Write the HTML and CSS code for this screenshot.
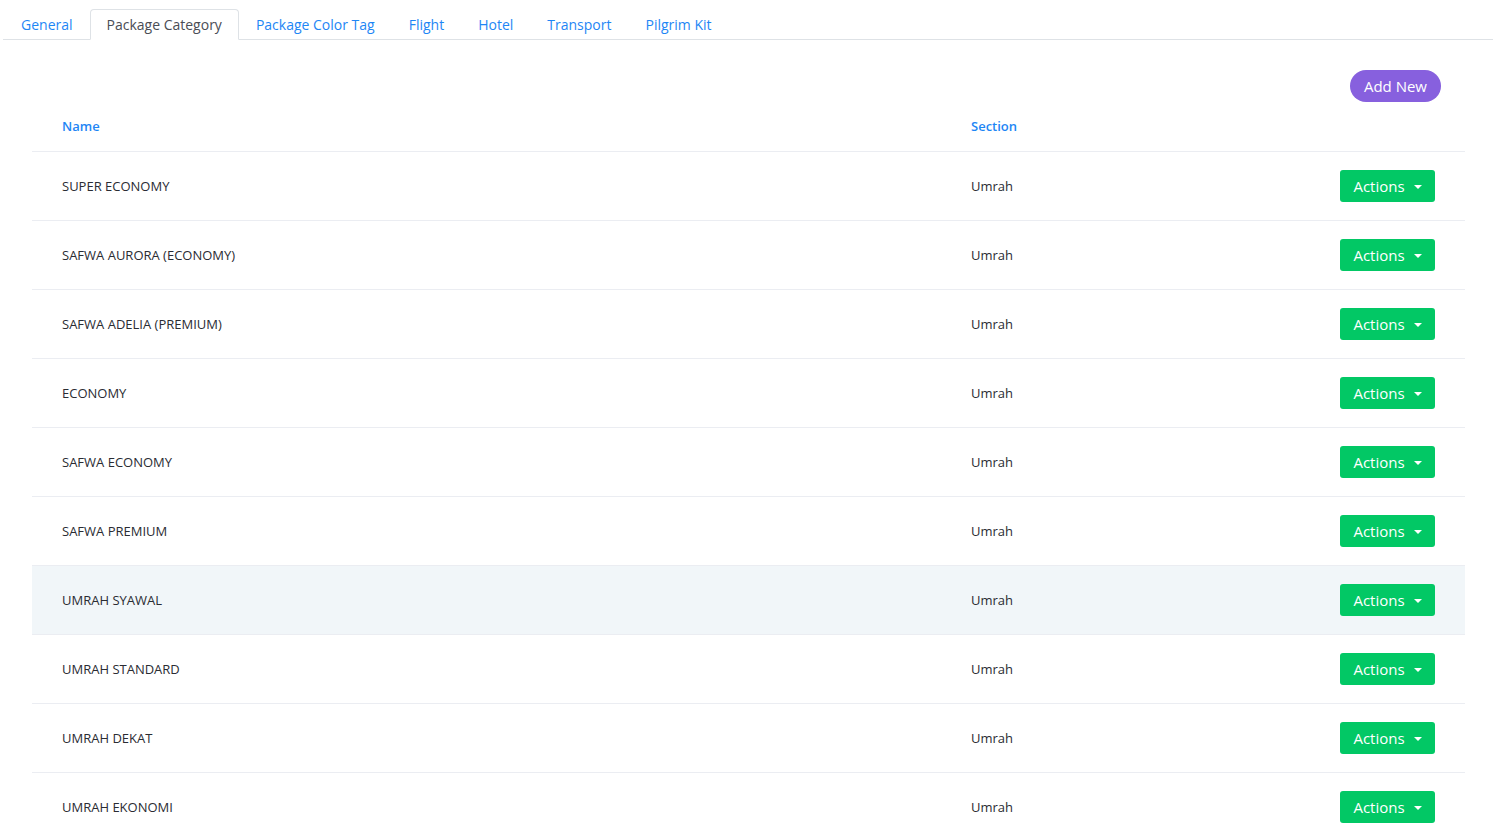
FILE: index.html
```html
<!DOCTYPE html>
<html>
<head>
  <link rel="stylesheet" href="styles.css">
</head>
<body>
  <div class="page">
    <ul class="tabs">
      <li><a href="#">General</a></li>
      <li class="active"><a href="#">Package Category</a></li>
      <li><a href="#">Package Color Tag</a></li>
      <li><a href="#">Flight</a></li>
      <li><a href="#">Hotel</a></li>
      <li><a href="#">Transport</a></li>
      <li><a href="#">Pilgrim Kit</a></li>
    </ul>

    <div class="panel">
      <div class="toolbar">
        <button class="btn-add">Add New</button>
      </div>
      <table class="list">
        <thead>
          <tr>
            <th class="col-name">Name</th>
            <th class="col-section">Section</th>
            <th></th>
          </tr>
        </thead>
        <tbody>
          <tr><td>SUPER ECONOMY</td><td>Umrah</td><td class="col-act"><button class="btn-actions">Actions <span class="caret"></span></button></td></tr>
          <tr><td>SAFWA AURORA (ECONOMY)</td><td>Umrah</td><td class="col-act"><button class="btn-actions">Actions <span class="caret"></span></button></td></tr>
          <tr><td>SAFWA ADELIA (PREMIUM)</td><td>Umrah</td><td class="col-act"><button class="btn-actions">Actions <span class="caret"></span></button></td></tr>
          <tr><td>ECONOMY</td><td>Umrah</td><td class="col-act"><button class="btn-actions">Actions <span class="caret"></span></button></td></tr>
          <tr><td>SAFWA ECONOMY</td><td>Umrah</td><td class="col-act"><button class="btn-actions">Actions <span class="caret"></span></button></td></tr>
          <tr><td>SAFWA PREMIUM</td><td>Umrah</td><td class="col-act"><button class="btn-actions">Actions <span class="caret"></span></button></td></tr>
          <tr class="hover"><td>UMRAH SYAWAL</td><td>Umrah</td><td class="col-act"><button class="btn-actions">Actions <span class="caret"></span></button></td></tr>
          <tr><td>UMRAH STANDARD</td><td>Umrah</td><td class="col-act"><button class="btn-actions">Actions <span class="caret"></span></button></td></tr>
          <tr><td>UMRAH DEKAT</td><td>Umrah</td><td class="col-act"><button class="btn-actions">Actions <span class="caret"></span></button></td></tr>
          <tr><td>UMRAH EKONOMI</td><td>Umrah</td><td class="col-act"><button class="btn-actions">Actions <span class="caret"></span></button></td></tr>
        </tbody>
      </table>
    </div>
  </div>
</body>
</html>
```

FILE: styles.css
```css
body {
  margin: 0;
  background: #fff;
  font-family: "Open Sans", "DejaVu Sans", sans-serif;
  color: #2a2c33;
}
.page {
  padding: 9px 12px 0 3px;
}
.tabs {
  list-style: none;
  margin: 0;
  padding: 0 0 0 1px;
  display: flex;
  border-bottom: 1px solid #dee2e6;
}
.tabs li {
  margin-bottom: -1px;
}
.tabs a {
  display: block;
  padding: 0 16px;
  height: 29px;
  line-height: 29px;
  font-size: 14px;
  color: #1e86f5;
  text-decoration: none;
  border: 1px solid transparent;
  border-radius: 4px 4px 0 0;
}
.tabs .active a {
  color: #4a4d55;
  background: #fff;
  border-color: #dee2e6 #dee2e6 #fff;
}
.panel {
  padding: 0 28px 0 29px;
}
.toolbar {
  display: flex;
  justify-content: flex-end;
  padding: 30px 24px 0 0;
  height: 32px;
}
.btn-add {
  background: #8760de;
  color: #fff;
  border: none;
  border-radius: 16px;
  height: 32px;
  padding: 0 14px;
  font-family: inherit;
  font-size: 15px;
}
.list {
  width: 100%;
  border-collapse: collapse;
  font-size: 13px;
}
.list th {
  text-align: left;
  color: #1e86f5;
  font-weight: 600;
  height: 48px;
  padding: 0 30px 1px;
}
.list .col-name {
  width: 849px;
}
.list td {
  height: 68px;
  padding: 0 30px;
  border-top: 1px solid #ebedf2;
}
.list tr.hover td {
  background: #f1f6f9;
}
.list .col-act {
  text-align: right;
}
.btn-actions {
  background: #02c865;
  color: #fff;
  border: none;
  border-radius: 3px;
  height: 32px;
  width: 95px;
  font-family: inherit;
  font-size: 15px;
  padding: 0;
}
.caret {
  display: inline-block;
  margin-left: 5px;
  vertical-align: 3px;
  border-top: 4px solid #fff;
  border-left: 4px solid transparent;
  border-right: 4px solid transparent;
}
```
